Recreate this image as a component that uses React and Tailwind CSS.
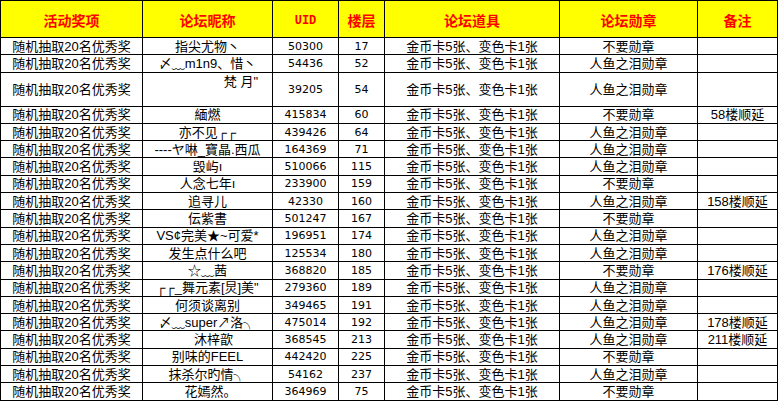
import React from "react";

const rows = [
  ["指尖尤物丶", "50300", "17", "不要勋章", ""],
  ["〆﹏m1n9、惜丶", "54436", "52", "人鱼之泪勋章", ""],
  ["梵 月\"", "39205", "54", "人鱼之泪勋章", ""],
  ["緬燃", "415834", "60", "不要勋章", "58楼顺延"],
  ["亦不见┌┌", "439426", "64", "人鱼之泪勋章", ""],
  ["----ヤ啉_寶晶.西瓜", "164369", "71", "人鱼之泪勋章", ""],
  ["毁屿ı", "510066", "115", "人鱼之泪勋章", ""],
  ["人念七年ı", "233900", "159", "不要勋章", ""],
  ["追寻儿", "42330", "160", "人鱼之泪勋章", "158楼顺延"],
  ["伝紫書", "501247", "167", "不要勋章", ""],
  ["VS¢完美★~可爱*", "196951", "174", "人鱼之泪勋章", ""],
  ["发生点什么吧", "125534", "180", "人鱼之泪勋章", ""],
  ["☆﹏茜", "368820", "185", "不要勋章", "176楼顺延"],
  ["┌┌_舞元素[炅]美\"", "279360", "189", "人鱼之泪勋章", ""],
  ["何须谈离别", "349465", "191", "人鱼之泪勋章", ""],
  ["〆﹏super↗洛╮", "475014", "192", "人鱼之泪勋章", "178楼顺延"],
  ["沐梓歆", "368545", "213", "人鱼之泪勋章", "211楼顺延"],
  ["别味的FEEL", "442420", "225", "不要勋章", ""],
  ["抹杀尔旳情╮", "54162", "237", "人鱼之泪勋章", ""],
  ["花嫣然。", "364969", "75", "不要勋章", ""],
];

// a few nicknames sit a little right of centre in the sheet
const nudge = { 16: "pl-[12px]", 19: "pl-[6px]" };

const td = "border border-black p-0 text-center align-middle whitespace-nowrap overflow-hidden";
const num = "font-['DejaVu_Sans',sans-serif] text-[11px]";

export default function App() {
  return (
    <div className="w-[778px] h-[401px] bg-white overflow-hidden font-['Liberation_Sans','Noto_Sans_CJK_SC',sans-serif] text-[13px] leading-[15px] text-black">
      <table className="w-[777px] border-collapse table-fixed">
        <colgroup>
          <col className="w-[142px]" />
          <col className="w-[130px]" />
          <col className="w-[66px]" />
          <col className="w-[46px]" />
          <col className="w-[175px]" />
          <col className="w-[138px]" />
          <col className="w-[80px]" />
        </colgroup>
        <thead>
          <tr className="h-[37px] bg-[#ffff00] text-[#ff0000] font-bold text-[14px]">
            <th className={td + " pt-[4px]"}>活动奖项</th>
            <th className={td + " pt-[4px]"}>论坛昵称</th>
            <th className={td + " pt-[4px] font-['Liberation_Mono',monospace] text-[12px]"}>UID</th>
            <th className={td + " pt-[4px]"}>楼层</th>
            <th className={td + " pt-[4px]"}>论坛道具</th>
            <th className={td + " pt-[4px]"}>论坛勋章</th>
            <th className={td + " pt-[4px]"}>备注</th>
          </tr>
        </thead>
        <tbody>
          {rows.map(([name, uid, floor, medal, note], i) => {
            const tall = i === 2;
            return (
              <tr key={i} className={tall ? "h-[34px]" : "h-[17.3px]"}>
                <td className={td}>随机抽取20名优秀奖</td>
                {tall ? (
                  <td className={td + " align-top text-right pr-[14px] pt-[1px]"}>{name}</td>
                ) : (
                  <td className={td + " " + (nudge[i] || "")}>{name}</td>
                )}
                <td className={td + " " + num}>{uid}</td>
                <td className={td + " " + num}>{floor}</td>
                <td className={td}>金币卡5张、变色卡1张</td>
                <td className={td}>{medal}</td>
                <td className={td}>{note}</td>
              </tr>
            );
          })}
        </tbody>
      </table>
    </div>
  );
}
